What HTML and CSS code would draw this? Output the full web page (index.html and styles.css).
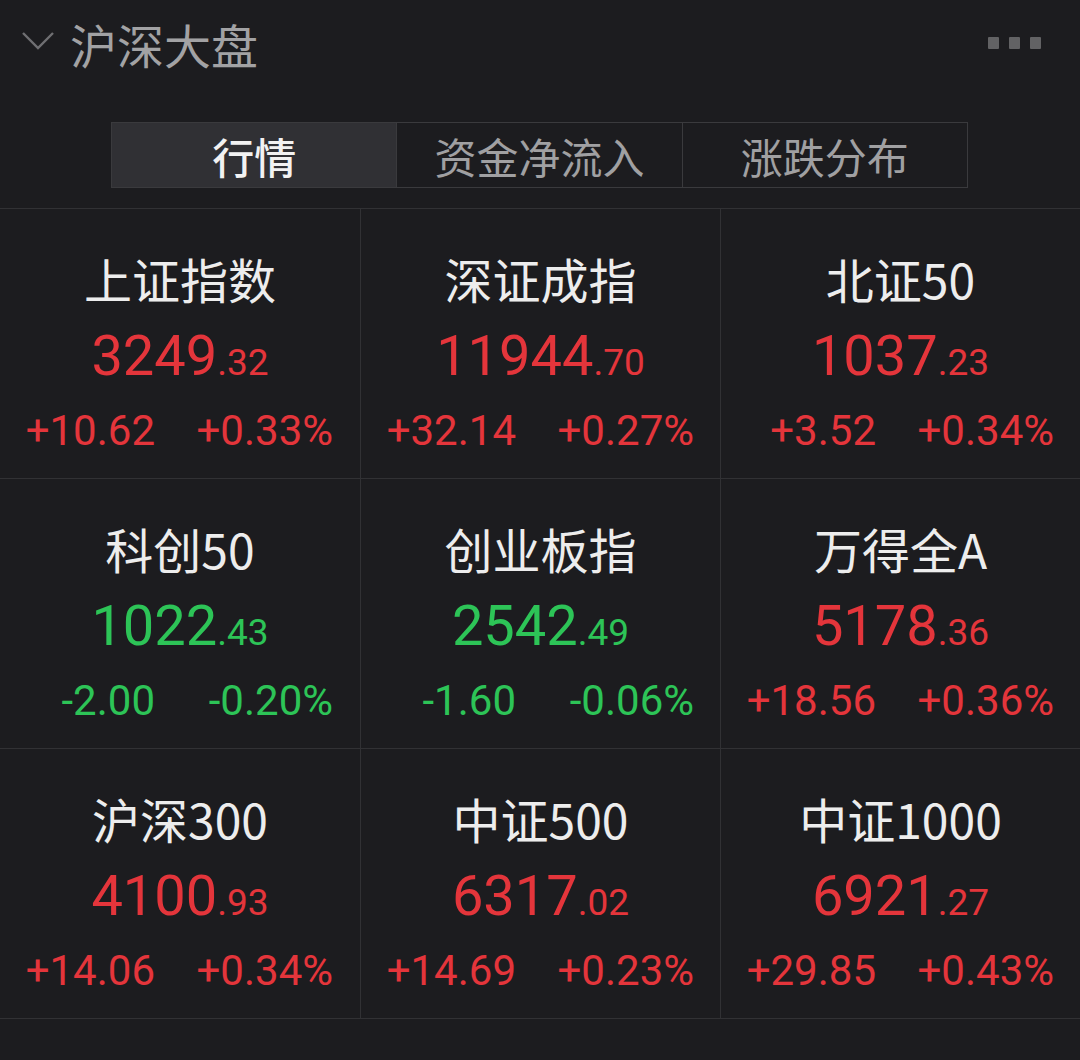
FILE: index.html
```html
<!DOCTYPE html>
<html lang="zh-CN">
<head>
<meta charset="utf-8">
<link rel="stylesheet" href="styles.css">
</head>
<body>
<div class="page">
  <header class="header">
    <div class="header-left">
      <svg class="chevron" width="34" height="20" viewBox="0 0 34 20"><polyline points="2,2 17,17 32,2" fill="none" stroke="#6f6f72" stroke-width="2.4"/></svg>
      <span class="title">沪深大盘</span>
    </div>
    <div class="more"><i></i><i></i><i></i></div>
  </header>

  <div class="tabs-wrap">
    <div class="tabs">
      <div class="tab active">行情</div>
      <div class="tab">资金净流入</div>
      <div class="tab">涨跌分布</div>
    </div>
  </div>

  <div class="grid">
    <div class="cell">
      <div class="name">上证指数</div>
      <div class="price up">3249<span class="dec">.32</span></div>
      <div class="chg up"><span>+10.62</span><span>+0.33%</span></div>
    </div>
    <div class="cell">
      <div class="name">深证成指</div>
      <div class="price up">11944<span class="dec">.70</span></div>
      <div class="chg up"><span>+32.14</span><span>+0.27%</span></div>
    </div>
    <div class="cell">
      <div class="name">北证50</div>
      <div class="price up">1037<span class="dec">.23</span></div>
      <div class="chg up"><span>+3.52</span><span>+0.34%</span></div>
    </div>

    <div class="cell">
      <div class="name">科创50</div>
      <div class="price down">1022<span class="dec">.43</span></div>
      <div class="chg down"><span>-2.00</span><span>-0.20%</span></div>
    </div>
    <div class="cell">
      <div class="name">创业板指</div>
      <div class="price down">2542<span class="dec">.49</span></div>
      <div class="chg down"><span>-1.60</span><span>-0.06%</span></div>
    </div>
    <div class="cell">
      <div class="name">万得全A</div>
      <div class="price up">5178<span class="dec">.36</span></div>
      <div class="chg up"><span>+18.56</span><span>+0.36%</span></div>
    </div>

    <div class="cell">
      <div class="name">沪深300</div>
      <div class="price up">4100<span class="dec">.93</span></div>
      <div class="chg up"><span>+14.06</span><span>+0.34%</span></div>
    </div>
    <div class="cell">
      <div class="name">中证500</div>
      <div class="price up">6317<span class="dec">.02</span></div>
      <div class="chg up"><span>+14.69</span><span>+0.23%</span></div>
    </div>
    <div class="cell">
      <div class="name">中证1000</div>
      <div class="price up">6921<span class="dec">.27</span></div>
      <div class="chg up"><span>+29.85</span><span>+0.43%</span></div>
    </div>
  </div>
</div>
</body>
</html>
```

FILE: styles.css
```css
html, body {
  margin: 0;
  padding: 0;
  background: #1c1c1f;
}
body {
  font-family: Roboto, "Noto Sans CJK SC", sans-serif;
  color: #ececec;
  width: 1080px;
  height: 1060px;
  overflow: hidden;
}
.header {
  height: 95px;
  display: flex;
  align-items: flex-start;
  justify-content: space-between;
}
.header-left {
  display: flex;
  align-items: center;
  padding-left: 21px;
  padding-top: 16px;
  height: 56px;
}
.chevron {
  display: block;
  margin-right: 15px;
  margin-top: -6px;
}
.title {
  font-family: "Noto Sans CJK SC", sans-serif;
  font-size: 47px;
  color: #a2a2a4;
  line-height: 56px;
}
.more {
  display: flex;
  gap: 10px;
  padding-top: 37px;
  padding-right: 39px;
}
.more i {
  display: block;
  width: 11px;
  height: 12px;
  background: #626264;
  border-radius: 1px;
}
.tabs-wrap {
  padding-top: 27px;
  padding-left: 111px;
  height: 113px;
  box-sizing: border-box;
}
.tabs {
  display: flex;
  width: 857px;
  height: 66px;
  box-sizing: border-box;
  border: 1px solid #3a3a3d;
}
.tab {
  flex: 1;
  display: flex;
  align-items: center;
  justify-content: center;
  font-family: "Noto Sans CJK SC", sans-serif;
  font-size: 42px;
  color: #a0a0a2;
  border-left: 1px solid #3a3a3d;
}
.tab:first-child {
  border-left: none;
}
.tab.active {
  background: #303034;
  color: #f2f2f2;
  font-weight: 500;
}
.grid {
  display: grid;
  grid-template-columns: 360px 360px 360px;
  grid-auto-rows: 270px;
  border-top: 1px solid #313134;
}
.cell {
  border-bottom: 1px solid #313134;
  border-left: 1px solid #313134;
  box-sizing: border-box;
  display: flex;
  flex-direction: column;
  align-items: center;
  padding-top: 39px;
}
.cell:nth-child(3n+1) {
  border-left: none;
}
.name {
  font-family: "Noto Sans CJK SC", sans-serif;
  font-size: 48px;
  line-height: 60px;
  color: #ededed;
}
.price {
  font-size: 56px;
  line-height: 70px;
  margin-top: 13px;
}
.price .dec {
  font-size: 37px;
}
.chg {
  align-self: stretch;
  display: grid;
  grid-template-columns: 155px 178px;
  font-size: 42px;
  line-height: 50px;
  margin-top: 8px;
  text-align: right;
}
.up { color: #e4353b; }
.down { color: #2dc457; }
```
